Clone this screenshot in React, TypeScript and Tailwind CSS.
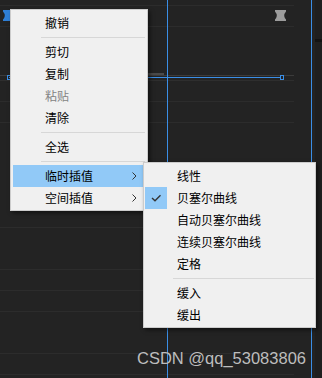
import React from 'react';

type MenuEntry =
  | { label: string; disabled?: boolean; sub?: boolean; active?: boolean; checked?: boolean }
  | 'sep';

const mainMenu: MenuEntry[] = [
  { label: '撤销' },
  'sep',
  { label: '剪切' },
  { label: '复制' },
  { label: '粘贴', disabled: true },
  { label: '清除' },
  'sep',
  { label: '全选' },
  'sep',
  { label: '临时插值', sub: true, active: true },
  { label: '空间插值', sub: true },
];

const subMenu: MenuEntry[] = [
  { label: '线性' },
  { label: '贝塞尔曲线', checked: true },
  { label: '自动贝塞尔曲线' },
  { label: '连续贝塞尔曲线' },
  { label: '定格' },
  'sep',
  { label: '缓入' },
  { label: '缓出' },
];

// a track divider in the graph editor
const Rule = () => <div className="h-px shrink-0 bg-[#2c2c2c]" />;

const Hourglass = ({ color }: { color: string }) => (
  <svg width="11" height="11" viewBox="0 0 11 11">
    <path d="M0 0H11V1.5Q7.5 5.5 11 9.5V11H0V9.5Q3.5 5.5 0 1.5Z" fill={color} />
  </svg>
);

const MenuRows = ({ items }: { items: MenuEntry[] }) => (
  <>
    {items.map((item, i) => {
      if (item === 'sep') {
        return <div key={i} className="my-[3px] ml-[28px] h-px bg-[#d7d7d7]" />;
      }
      return (
        <div
          key={i}
          className={`flex h-[22px] items-center ${item.active ? 'bg-[#91c9f7]' : ''}`}
        >
          <div
            className={`flex h-[22px] w-[22px] items-center justify-center ${
              item.checked ? 'bg-[#91c9f7]' : ''
            }`}
          >
            {item.checked && (
              <svg width="22" height="22" viewBox="0 0 22 22">
                <polyline
                  points="7,11 10,13.8 15.5,8.3"
                  fill="none"
                  stroke="#333"
                  strokeWidth="1.4"
                />
              </svg>
            )}
          </div>
          <span
            className={`ml-[10px] flex-1 leading-none ${
              item.disabled ? 'text-[#838383]' : 'text-black'
            }`}
          >
            {item.label}
          </span>
          {item.sub && (
            <svg className="mr-[8px]" width="5" height="8" viewBox="0 0 5 8">
              <polyline points="0.5,0.5 4,4 0.5,7.5" fill="none" stroke="#333" strokeWidth="1" />
            </svg>
          )}
        </div>
      );
    })}
  </>
);

export default function App() {
  return (
    <div className="relative flex h-[378px] w-[322px] overflow-hidden bg-[#232323] font-['Noto_Sans_CJK_SC',sans-serif] text-[12px]">
      {/* graph editor canvas */}
      <div className="relative flex w-[294px] flex-col">
        <div className="h-[5px] shrink-0" />
        <Rule />
        <div className="flex h-[20px] shrink-0 items-start justify-between pl-[3px] pr-[8px] pt-[4px]">
          <Hourglass color="#2f7fd6" />
          <Hourglass color="#9c9c9c" />
        </div>
        <Rule />
        <div className="h-[46px] shrink-0" />

        {/* property curve */}
        <div className="relative flex h-[8px] shrink-0 flex-col">
          <div className="ml-[148px] h-[2px] w-[16px] bg-[#4a4a4a]" />
          <div className="h-px bg-[#3b3b3b]" />
          <div className="mt-px ml-[9px] h-px w-[272px] bg-[#3a8ee6]" />
          <div className="mt-[2px] h-px bg-[#2e2e2e]" />
          <div className="absolute left-[7px] top-[2px] h-[5px] w-[4px] border border-[#3a8ee6]" />
          <div className="absolute left-[280px] top-[2px] h-[5px] w-[4px] border border-[#3a8ee6]" />
        </div>

        <div className="h-[20px] shrink-0" />
        <Rule />
        <div className="h-[20px] shrink-0" />
        <Rule />
        <div className="h-[104px] shrink-0" />
        <Rule />
        <div className="h-[41px] shrink-0" />
        <Rule />
        <div className="h-[20px] shrink-0" />
        <Rule />
        <div className="h-[20px] shrink-0" />
        <Rule />
        <div className="h-[41px] shrink-0" />
        <Rule />
        <div className="h-[20px] shrink-0" />
        <Rule />

        {/* current time indicator */}
        <div className="absolute left-[167px] top-0 h-full w-px bg-[#3a8ee6]" />
      </div>

      {/* work area end marker and side panel */}
      <div className="ml-[17px] w-px bg-[#3a8ee6]" />
      <div className="ml-[3px] flex flex-1 flex-col bg-[#1f1f1f]">
        <div className="mt-[39px] h-[3px] bg-[#131313]" />
      </div>

      {/* watermark */}
      <div className="absolute right-[16px] top-[347px] font-['Liberation_Sans',sans-serif] text-[16.5px] leading-[22px] text-[#bdbdbd]">
        CSDN @qq_53083806
      </div>

      {/* context menu */}
      <div className="absolute left-[10px] top-[9px] w-[138px] border border-[#cccccc] bg-[#f0f0f0] px-[2px] pb-px pt-[2px] shadow-[2px_2px_4px_rgba(0,0,0,0.5)]">
        <MenuRows items={mainMenu} />
      </div>

      {/* submenu */}
      <div className="absolute left-[143px] top-[162px] w-[173px] border border-[#cccccc] bg-[#f0f0f0] px-px pb-px pt-[2px] shadow-[2px_2px_4px_rgba(0,0,0,0.5)]">
        <MenuRows items={subMenu} />
      </div>
    </div>
  );
}
